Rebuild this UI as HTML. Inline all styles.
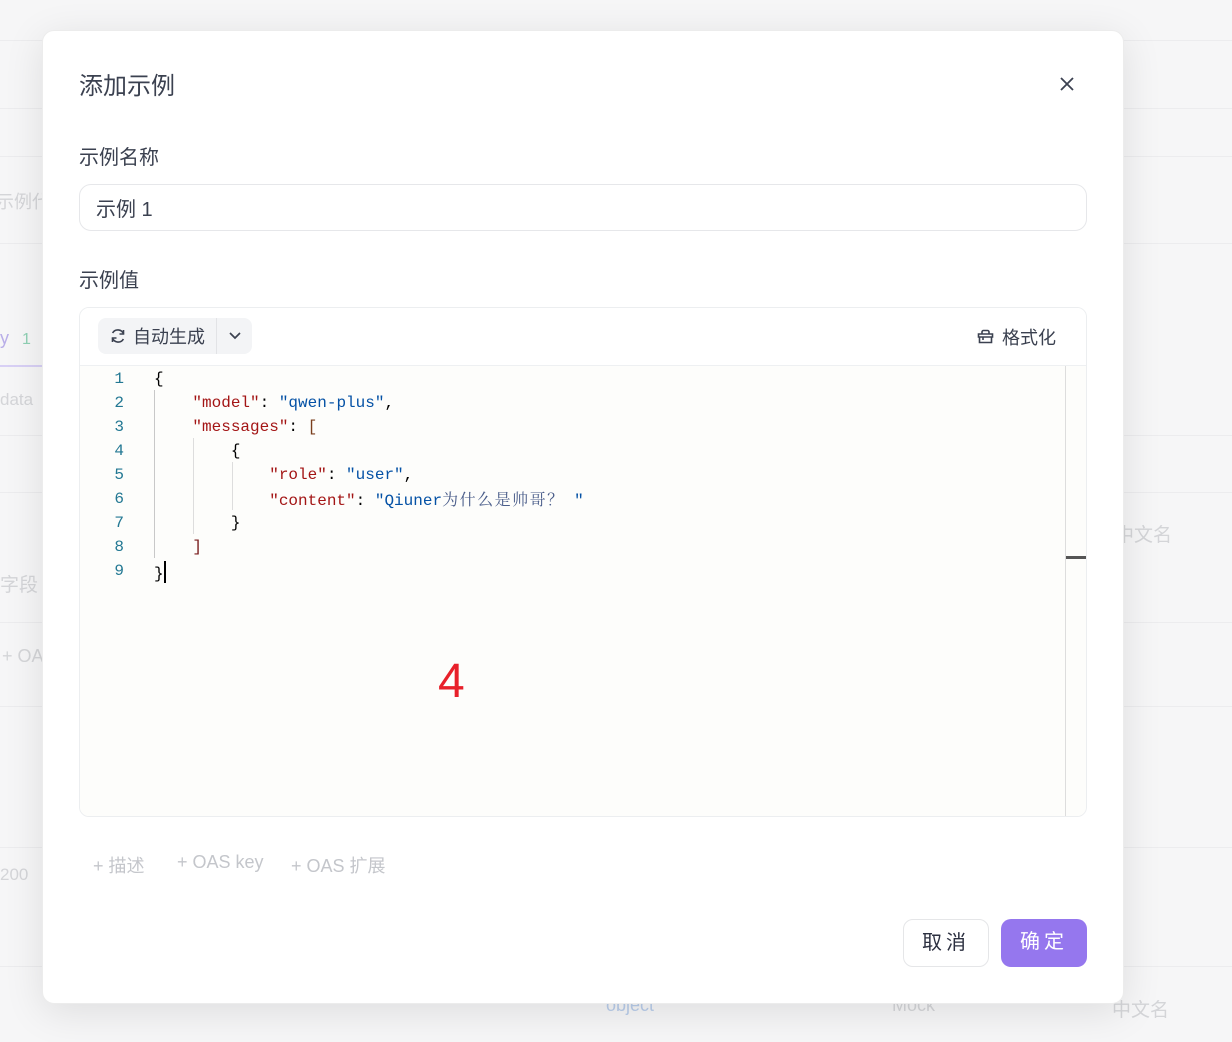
<!DOCTYPE html>
<html><head><meta charset="utf-8"><style>
*{box-sizing:border-box;margin:0;padding:0}
body{width:1232px;height:1042px;overflow:hidden;background:#f6f6f7;font-family:"Liberation Sans","Noto Sans CJK SC",sans-serif;position:relative;color:#333}
.bg{position:absolute;color:#d4d5d8;font-size:18px}
.hl{position:absolute;left:0;right:0;height:1px;background:#ececee}
.modal{position:absolute;left:42px;top:30px;width:1082px;height:974px;background:#fff;border-radius:12px;box-shadow:0 8px 40px rgba(0,0,0,.10);border:1px solid #ececec}
.t{position:absolute;font-size:24px;color:#3b4150;left:36px;top:35px}
.lbl{position:absolute;left:36px;font-size:20px;color:#3b4150}
.inp{position:absolute;left:36px;top:153px;width:1008px;height:47px;border:1px solid #e6e7ea;border-radius:12px;font-size:20px;color:#3b4150;padding:8px 16px}
.ed{position:absolute;left:36px;top:276px;width:1008px;height:510px;border:1px solid #eceef0;border-radius:10px;overflow:hidden}
.tb{height:58px;border-bottom:1px solid #eef0f2;position:relative;background:#fff}
.gen{position:absolute;left:18px;top:10px;width:154px;height:36px;background:#f3f4f6;border-radius:8px;font-size:18px;color:#3b4150}
.code{position:absolute;top:58px;left:0;right:0;bottom:0;background:#fdfdfb;font-family:"Liberation Mono","Noto Sans CJK SC",monospace;font-size:16px;line-height:20px}
.ln{position:absolute;left:24px;width:20px;text-align:right;color:#237893}
.cl{position:absolute;left:74px;white-space:pre;color:#000}
.k{color:#a31515}.s{color:#0451a5}
.g{position:absolute;width:1px;background:#c8c8c8}
.foot{position:absolute;top:821px;font-size:18px;color:#c4c6cb}
.btn{position:absolute;top:888px;height:48px;border-radius:10px;font-size:20px;text-align:center;line-height:46px;letter-spacing:4px}
</style></head><body>
<div class="hl" style="top:40px"></div><div class="hl" style="top:108px"></div><div class="hl" style="top:156px"></div><div class="hl" style="top:243px"></div><div class="hl" style="top:435px"></div><div class="hl" style="top:492px"></div><div class="hl" style="top:622px"></div><div class="hl" style="top:706px"></div><div class="hl" style="top:847px"></div><div class="hl" style="top:966px"></div>
<div class="bg" style="left:-4px;top:188px">示例代码</div>
<div class="bg" style="left:0;top:328px;color:#b9aee8">y <span style="color:#8fd1b4;font-size:16px;margin-left:8px">1</span></div>
<div style="position:absolute;left:0;top:365px;width:42px;height:2px;background:#d8d0f5"></div>
<div class="bg" style="left:0;top:390px;font-size:17px">data</div>
<div class="bg" style="left:0;top:570px;font-size:19px">字段</div>
<div class="bg" style="left:2px;top:646px">+ OA</div>
<div class="bg" style="left:0;top:865px;font-size:17px">200</div>
<div class="bg" style="left:1115px;top:520px;font-size:19px">中文名</div>
<div class="bg" style="left:606px;top:995px;color:#b9cdea">object</div>
<div class="bg" style="left:892px;top:995px">Mock</div>
<div class="bg" style="left:1112px;top:995px;font-size:19px">中文名</div>
<div class="modal">
<div class="t">添加示例</div>
<svg style="position:absolute;left:1017px;top:46px" width="14" height="14" viewBox="0 0 14 14"><path d="M1 1L13 13M13 1L1 13" stroke="#3b4150" stroke-width="1.8"/></svg>
<div class="lbl" style="top:110px">示例名称</div>
<div class="inp">示例 1</div>
<div class="lbl" style="top:233px">示例值</div>
<div class="ed">
<div class="tb">
<div class="gen"><svg style="position:absolute;left:12px;top:10px" width="16" height="16" viewBox="0 0 16 16" fill="none" stroke="#3b4150" stroke-width="1.6"><path d="M13.5 6A6 6 0 0 0 2.6 5M2.5 10a6 6 0 0 0 10.9 1"/><path d="M13.5 2v4h-4M2.5 14v-4h4"/></svg><span style="position:absolute;left:35px;top:5px">自动生成</span><div style="position:absolute;left:118px;top:0;width:1px;height:36px;background:#e2e3e6"></div><svg style="position:absolute;left:130px;top:12px" width="14" height="12" viewBox="0 0 14 12"><path d="M2 3l5 5 5-5" stroke="#3b4150" stroke-width="1.7" fill="none"/></svg></div>
<svg style="position:absolute;left:897px;top:21px" width="17" height="15" viewBox="0 0 17 15" fill="none" stroke="#3b4150" stroke-width="1.6"><path d="M5 5V3a1.5 1.5 0 0 1 1.5-1.5h4A1.5 1.5 0 0 1 12 3v2M1.5 5h14v3h-14zM2.5 8v5.5h12V8M6 8v3"/></svg>
<span style="position:absolute;left:922px;top:16px;font-size:18px;color:#3b4150">格式化</span>
</div>
<div class="code">
<div class="g" style="left:74px;top:24px;height:168px"></div>
<div class="g" style="left:113px;top:72px;height:96px;background:#ddd"></div>
<div class="g" style="left:152px;top:96px;height:48px;background:#ddd"></div>
<div style="position:absolute;left:985px;top:0;bottom:0;width:1px;background:#ddd"></div>
<div style="position:absolute;left:986px;top:190px;width:22px;height:3px;background:#555"></div>
<div class="ln" style="top:3px">1</div><div class="cl" style="top:3px">{</div>
<div class="ln" style="top:27px">2</div><div class="cl" style="top:27px">    <span class="k">"model"</span>: <span class="s">"qwen-plus"</span>,</div>
<div class="ln" style="top:51px">3</div><div class="cl" style="top:51px">    <span class="k">"messages"</span>: <span style="color:#7a3e1d">[</span></div>
<div class="ln" style="top:75px">4</div><div class="cl" style="top:75px">        {</div>
<div class="ln" style="top:99px">5</div><div class="cl" style="top:99px">            <span class="k">"role"</span>: <span class="s">"user"</span>,</div>
<div class="ln" style="top:123px">6</div><div class="cl" style="top:123px">            <span class="k">"content"</span>: <span class="s">"Qiuner<span style="font-family:'Noto Serif CJK SC',serif;color:#4a5d8a;font-size:16px;letter-spacing:1.5px;line-height:20px">为什么是帅哥？</span> "</span></div>
<div class="ln" style="top:147px">7</div><div class="cl" style="top:147px">        }</div>
<div class="ln" style="top:171px">8</div><div class="cl" style="top:171px">    <span style="color:#7a1d1d">]</span></div>
<div class="ln" style="top:195px">9</div><div class="cl" style="top:195px">}<span style="display:inline-block;width:2px;height:22px;background:#000;vertical-align:-5px"></span></div>
<div style="position:absolute;left:358px;top:288px;font-family:'Liberation Sans',sans-serif;font-size:48px;line-height:56px;color:#e8202a">4</div>
</div>
</div>
<div class="foot" style="left:50px">+ 描述</div>
<div class="foot" style="left:134px">+ OAS key</div>
<div class="foot" style="left:248px">+ OAS 扩展</div>
<div class="btn" style="left:860px;width:86px;border:1px solid #e5e6e8;color:#2c3040">取消</div>
<div class="btn" style="left:958px;width:86px;background:#9577ee;color:#fff">确定</div>
</div>
</body></html>
